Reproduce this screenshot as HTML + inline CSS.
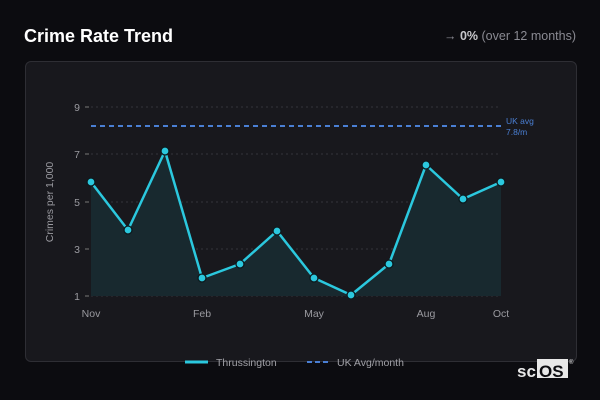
<!DOCTYPE html>
<html><head><style>
body{margin:0;width:600px;height:400px;background:#0c0c10;font-family:"Liberation Sans",sans-serif;overflow:hidden;position:relative}
.t{position:absolute;left:24px;top:26px;color:#fff;font-size:18px;font-weight:bold}
.r{position:absolute;right:24px;top:29px;color:#8a8a92;font-size:12.5px}
.r b{color:#c8c8cc}
.card{position:absolute;left:25px;top:61px;width:550px;height:299px;background:#18181d;border:1px solid #2e2e34;border-radius:6px}
</style></head><body>
<div class="t">Crime Rate Trend</div>
<div class="r">→ <b>0%</b> (over 12 months)</div>
<div class="card"></div>
<svg width="600" height="400" style="position:absolute;left:0;top:0" font-family="Liberation Sans,sans-serif">
<g stroke="#34343a" stroke-dasharray="2,3" stroke-width="1">
<line x1="91" y1="107" x2="501" y2="107"/><line x1="91" y1="154" x2="501" y2="154"/><line x1="91" y1="202" x2="501" y2="202"/><line x1="91" y1="249" x2="501" y2="249"/><line x1="91" y1="296" x2="501" y2="296"/>
</g>
<g stroke="#777" stroke-width="1"><line x1="85" y1="107" x2="89" y2="107"/><line x1="85" y1="154" x2="89" y2="154"/><line x1="85" y1="202" x2="89" y2="202"/><line x1="85" y1="249" x2="89" y2="249"/><line x1="85" y1="296" x2="89" y2="296"/></g>
<g fill="#9a9aa0" font-size="10.5" text-anchor="end"><text x="80" y="111">9</text><text x="80" y="158">7</text><text x="80" y="206">5</text><text x="80" y="253">3</text><text x="80" y="300">1</text></g>
<text transform="translate(53,202) rotate(-90)" fill="#9a9aa0" font-size="10.5" text-anchor="middle">Crimes per 1,000</text>
<g fill="#9a9aa0" font-size="10.5" text-anchor="middle"><text x="91" y="317">Nov</text><text x="202" y="317">Feb</text><text x="314" y="317">May</text><text x="426" y="317">Aug</text><text x="501" y="317">Oct</text></g>
<polygon fill="#18292f" points="91,296 91,182 128,230 165,151 202,278 240,264 277,231 314,278 351,295 389,264 426,165 463,199 501,182 501,296"/>
<line x1="91" y1="126" x2="501" y2="126" stroke="#4a7fd4" stroke-width="2" stroke-dasharray="5,4"/>
<text x="506" y="124" fill="#4a7fd4" font-size="8.5">UK avg</text><text x="506" y="135" fill="#4a7fd4" font-size="8.5">7.8/m</text>
<polyline fill="none" stroke="#2bc8de" stroke-width="2.5" stroke-linejoin="round" points="91,182 128,230 165,151 202,278 240,264 277,231 314,278 351,295 389,264 426,165 463,199 501,182"/>
<g fill="#2bc8de" stroke="#0c1a1e" stroke-width="1.3">
<circle cx="91" cy="182" r="4"/><circle cx="128" cy="230" r="4"/><circle cx="165" cy="151" r="4"/><circle cx="202" cy="278" r="4"/><circle cx="240" cy="264" r="4"/><circle cx="277" cy="231" r="4"/><circle cx="314" cy="278" r="4"/><circle cx="351" cy="295" r="4"/><circle cx="389" cy="264" r="4"/><circle cx="426" cy="165" r="4"/><circle cx="463" cy="199" r="4"/><circle cx="501" cy="182" r="4"/>
</g>
<line x1="185" y1="362" x2="208" y2="362" stroke="#2bc8de" stroke-width="3"/>
<text x="216" y="366" fill="#a0a0a6" font-size="10.5">Thrussington</text>
<line x1="307" y1="362" x2="330" y2="362" stroke="#4a7fd4" stroke-width="2" stroke-dasharray="5,3"/>
<text x="337" y="366" fill="#a0a0a6" font-size="10.5">UK Avg/month</text>
<text x="517" y="377" fill="#e8e8e8" font-size="17" font-weight="bold">sc</text>
<rect x="537" y="359" width="31" height="19" fill="#e8e8e8"/>
<text x="539" y="377" fill="#0c0c10" font-size="17" font-weight="bold">OS</text>
<text x="569" y="364" fill="#e8e8e8" font-size="6">®</text>
</svg>
</body></html>
